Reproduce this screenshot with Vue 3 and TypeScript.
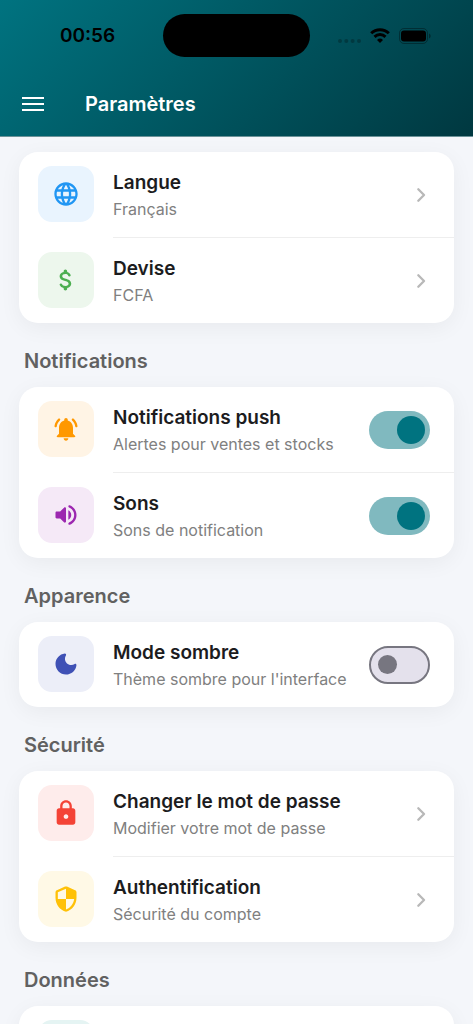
<script setup lang="ts">
import { reactive } from 'vue'

type IconName = 'globe' | 'dollar' | 'bell' | 'volume' | 'moon' | 'lock' | 'shield' | 'cloud'

interface Setting {
  id: string
  title: string
  subtitle: string
  icon: IconName
  kind: 'link' | 'switch'
}

interface Section {
  heading: string
  items: Setting[]
}

const icons: Record<IconName, string> = {
  globe:
    'M11.99 2C6.47 2 2 6.48 2 12s4.47 10 9.99 10C17.52 22 22 17.52 22 12S17.52 2 11.99 2zm6.93 6h-2.95c-.32-1.25-.78-2.45-1.38-3.56 1.84.63 3.37 1.91 4.33 3.56zM12 4.04c.83 1.2 1.48 2.53 1.91 3.96h-3.82c.43-1.43 1.08-2.76 1.91-3.96zM4.26 14C4.1 13.36 4 12.69 4 12s.1-1.36.26-2h3.38c-.08.66-.14 1.32-.14 2s.06 1.34.14 2H4.26zm.82 2h2.95c.32 1.25.78 2.45 1.38 3.56-1.84-.63-3.37-1.9-4.33-3.56zm2.95-8H5.08c.96-1.66 2.49-2.93 4.33-3.56C8.81 5.55 8.35 6.75 8.03 8zM12 19.96c-.83-1.2-1.48-2.53-1.91-3.96h3.82c-.43 1.43-1.08 2.76-1.91 3.96zM14.34 14H9.66c-.09-.66-.16-1.32-.16-2s.07-1.35.16-2h4.68c.09.65.16 1.32.16 2s-.07 1.34-.16 2zm.25 5.56c.6-1.11 1.06-2.31 1.38-3.56h2.95c-.96 1.65-2.49 2.93-4.33 3.56zM16.36 14c.08-.66.14-1.32.14-2s-.06-1.34-.14-2h3.38c.16.64.26 1.31.26 2s-.1 1.36-.26 2h-3.38z',
  dollar:
    'M11.8 10.9c-2.27-.59-3-1.2-3-2.15 0-1.09 1.01-1.85 2.7-1.85 1.42 0 2.13.54 2.39 1.4.12.4.45.7.87.7h.3c.66 0 1.13-.65.9-1.27-.42-1.18-1.4-2.16-2.96-2.54V4.5c0-.83-.67-1.5-1.5-1.5S10 3.67 10 4.5v.66c-1.94.42-3.5 1.68-3.5 3.61 0 2.31 1.91 3.46 4.7 4.13 2.5.6 3 1.48 3 2.41 0 .69-.49 1.79-2.7 1.79-1.65 0-2.5-.59-2.83-1.43-.15-.39-.49-.67-.9-.67h-.28c-.67 0-1.14.68-.89 1.3.57 1.39 1.9 2.21 3.4 2.53v.67c0 .83.67 1.5 1.5 1.5s1.5-.67 1.5-1.5v-.65c1.95-.37 3.5-1.5 3.5-3.55 0-2.84-2.43-3.81-4.7-4.4z',
  bell:
    'M12 22c1.1 0 2-.9 2-2h-4c0 1.1.9 2 2 2zm7.71-4.29L18 16v-5c0-3.07-1.63-5.64-4.5-6.32V4c0-.83-.67-1.5-1.5-1.5s-1.5.67-1.5 1.5v.68C7.64 5.36 6 7.92 6 11v5l-1.71 1.71c-.63.63-.18 1.29.7 1.29H19c.89 0 1.34-.66.71-1.29zM6.77 4.73c.42-.38.43-1.03.03-1.43-.38-.38-1-.39-1.39-.02C3.7 4.84 2.52 6.96 2.14 9.34c-.09.61.38 1.16 1 1.16.48 0 .9-.35.98-.83.3-1.94 1.26-3.67 2.65-4.94zM18.6 3.28c-.4-.37-1.02-.36-1.4.02-.4.4-.38 1.04.03 1.42 1.38 1.27 2.35 3 2.65 4.94.07.48.49.83.98.83.61 0 1.09-.55.99-1.16-.38-2.37-1.55-4.48-3.25-6.05z',
  volume:
    'M3 10v4c0 .55.45 1 1 1h3l3.29 3.29c.63.63 1.71.18 1.71-.71V6.41c0-.89-1.08-1.34-1.71-.71L7 9H4c-.55 0-1 .45-1 1zm13.5 2c0-1.77-1.02-3.29-2.5-4.03v8.05c1.48-.73 2.5-2.25 2.5-4.02zM14 4.45v.2c0 .38.25.71.6.85C17.18 6.53 19 9.06 19 12s-1.82 5.47-4.4 6.5c-.36.14-.6.47-.6.85v.2c0 .63.63 1.07 1.21.85C18.6 19.11 21 15.84 21 12s-2.4-7.11-5.79-8.4c-.58-.23-1.21.22-1.21.85z',
  moon:
    'M11.01 3.05C6.51 3.54 3 7.36 3 12c0 4.97 4.03 9 9 9 4.63 0 8.45-3.5 8.95-8 .09-.79-.78-1.42-1.54-.95-.84.54-1.84.85-2.91.85-2.98 0-5.4-2.42-5.4-5.4 0-1.06.31-2.06.84-2.89.45-.67-.04-1.63-.93-1.56z',
  lock:
    'M18 8h-1V6c0-2.76-2.24-5-5-5S7 3.24 7 6v2H6c-1.1 0-2 .9-2 2v10c0 1.1.9 2 2 2h12c1.1 0 2-.9 2-2V10c0-1.1-.9-2-2-2zm-6 9c-1.1 0-2-.9-2-2s.9-2 2-2 2 .9 2 2-.9 2-2 2zM9 8V6c0-1.66 1.34-3 3-3s3 1.34 3 3v2H9z',
  shield:
    'M11.19 1.36l-7 3.11C3.47 4.79 3 5.51 3 6.3V11c0 5.55 3.84 10.74 9 12 5.16-1.26 9-6.45 9-12V6.3c0-.79-.47-1.51-1.19-1.83l-7-3.11c-.51-.23-1.11-.23-1.62 0zM12 11.99h7c-.53 4.12-3.28 7.79-7 8.94V12H5V6.3l7-3.11v8.8z',
  cloud:
    'M19.35 10.04C18.67 6.59 15.64 4 12 4 9.11 4 6.6 5.64 5.35 8.04 2.34 8.36 0 10.91 0 14c0 3.31 2.69 6 6 6h13c2.76 0 5-2.24 5-5 0-2.64-2.05-4.78-4.65-4.96z',
}

const sections: Section[] = [
  {
    heading: '',
    items: [
      { id: 'langue', title: 'Langue', subtitle: 'Français', icon: 'globe', kind: 'link' },
      { id: 'devise', title: 'Devise', subtitle: 'FCFA', icon: 'dollar', kind: 'link' },
    ],
  },
  {
    heading: 'Notifications',
    items: [
      { id: 'push', title: 'Notifications push', subtitle: 'Alertes pour ventes et stocks', icon: 'bell', kind: 'switch' },
      { id: 'sons', title: 'Sons', subtitle: 'Sons de notification', icon: 'volume', kind: 'switch' },
    ],
  },
  {
    heading: 'Apparence',
    items: [
      { id: 'sombre', title: 'Mode sombre', subtitle: "Thème sombre pour l'interface", icon: 'moon', kind: 'switch' },
    ],
  },
  {
    heading: 'Sécurité',
    items: [
      { id: 'motdepasse', title: 'Changer le mot de passe', subtitle: 'Modifier votre mot de passe', icon: 'lock', kind: 'link' },
      { id: 'auth', title: 'Authentification', subtitle: 'Sécurité du compte', icon: 'shield', kind: 'link' },
    ],
  },
  {
    heading: 'Données',
    items: [{ id: 'donnees', title: '', subtitle: '', icon: 'cloud', kind: 'link' }],
  },
]

const enabled = reactive<Record<string, boolean>>({ push: true, sons: true, sombre: false })
</script>

<template>
  <div class="screen">
    <header class="header">
      <div class="status">
        <span class="time">00:56</span>
        <span class="island"></span>
        <span class="indicators">
          <svg class="dots" viewBox="0 0 24 4" aria-hidden="true">
            <circle cx="2" cy="2" r="2" />
            <circle cx="8.3" cy="2" r="2" />
            <circle cx="14.6" cy="2" r="2" />
            <circle cx="21" cy="2" r="2" />
          </svg>
          <svg class="wifi" viewBox="0 0 20 15" aria-hidden="true">
            <path d="M1.2 5.3a12.6 12.6 0 0 1 17.6 0" />
            <path d="M4.5 8.8a7.9 7.9 0 0 1 11 0" />
            <path class="wifi-tip" d="M10 15l-3-3.1a4.3 4.3 0 0 1 6 0z" />
          </svg>
          <svg class="battery" viewBox="0 0 32 16" aria-hidden="true">
            <rect class="shell" x=".5" y=".5" width="28" height="15" rx="4.5" />
            <path class="cap" d="M30 5.500c2.200.8 2.200 4.200 0 5z" />
            <rect x="2" y="2.500" width="25" height="11" rx="3" />
          </svg>
        </span>
      </div>
      <div class="toolbar">
        <button class="menu" type="button" aria-label="Menu">
          <svg viewBox="0 0 22 16" aria-hidden="true">
            <path d="M0 2h22M0 8h22M0 14h22" />
          </svg>
        </button>
        <h1>Paramètres</h1>
      </div>
    </header>

    <main class="content">
      <section v-for="section in sections" :key="section.heading">
        <h2 v-if="section.heading">{{ section.heading }}</h2>
        <div class="card">
          <component
            :is="item.kind === 'switch' ? 'label' : 'button'"
            v-for="item in section.items"
            :key="item.id"
            class="row"
            :type="item.kind === 'link' ? 'button' : undefined"
            :for="item.kind === 'switch' ? item.id : undefined"
          >
            <span class="tile" :class="item.icon">
              <svg viewBox="0 0 24 24" aria-hidden="true"><path :d="icons[item.icon]" /></svg>
            </span>
            <span class="body">
              <span class="texts">
                <span class="title">{{ item.title }}</span>
                <span class="subtitle">{{ item.subtitle }}</span>
              </span>
              <input
                v-if="item.kind === 'switch'"
                :id="item.id"
                v-model="enabled[item.id]"
                class="switch"
                type="checkbox"
                role="switch"
              />
              <svg v-else class="chevron" viewBox="0 0 24 24" aria-hidden="true">
                <path d="M9.700 7.100l4.900 4.900-4.900 4.900" />
              </svg>
            </span>
          </component>
        </div>
      </section>
    </main>
  </div>
</template>

<style>
html,
body {
  height: 100%;
  margin: 0;
}

body {
  overflow: hidden;
}

#app {
  height: 100%;
}
</style>

<style scoped>
.screen {
  display: flex;
  flex-direction: column;
  height: 100%;
  overflow: hidden;
  background: #f4f6fa;
  color: #1c1c1e;
  font-family: Inter, Roboto, "Liberation Sans", sans-serif;
}

.header {
  flex: none;
  background: linear-gradient(135deg, #007380, #003840);
  border-bottom: 1px solid #6b9298;
}

.status {
  display: grid;
  grid-template-columns: 1fr 147px 1fr;
  align-items: center;
  height: 71px;
}

.time {
  justify-self: center;
  padding-left: 12px;
  color: #000;
  font-size: 19px;
  font-weight: 600;
}

.island {
  height: 43px;
  border-radius: 22px;
  background: #000;
}

.indicators {
  display: flex;
  align-items: center;
  justify-content: flex-end;
  padding-right: 42px;
}

.indicators svg {
  flex: none;
}

.dots {
  width: 24px;
  height: 4px;
  margin: 10px 8px 0 0;
  opacity: 0.25;
}

.wifi {
  width: 20px;
  height: 15px;
  margin-right: 9px;
  fill: none;
  stroke: #000;
  stroke-width: 3;
}

.wifi-tip {
  fill: #000;
  stroke: none;
}

.battery {
  width: 32px;
  height: 16px;
}

.shell {
  fill: none;
  stroke: #000;
  opacity: 0.35;
}

.cap {
  opacity: 0.4;
}

.toolbar {
  display: flex;
  align-items: center;
  height: 65px;
  padding: 0 22px;
}

.menu {
  display: flex;
  margin: 0 41px 0 0;
  padding: 0;
  border: 0;
  background: none;
}

.menu svg {
  width: 22px;
  height: 16px;
  fill: none;
  stroke: #fff;
  stroke-width: 2;
}

h1 {
  margin: 0;
  color: #fff;
  font-size: 20px;
  font-weight: 600;
}

.content {
  padding: 15px 19px 0;
}

h2 {
  margin: 0;
  padding: 12px 5px 0;
  color: #616161;
  font-size: 20px;
  font-weight: 600;
  line-height: 52px;
}

.card {
  border-radius: 19px;
  background: #fff;
  box-shadow: 0 5px 22px rgba(0, 0, 0, 0.05);
  overflow: hidden;
}

.row {
  display: flex;
  box-sizing: border-box;
  width: 100%;
  margin: 0;
  padding: 0 0 0 19px;
  border: 0;
  background: none;
  color: inherit;
  font: inherit;
  text-align: left;
}

.tile {
  display: flex;
  flex: none;
  align-items: center;
  justify-content: center;
  width: 56px;
  height: 56px;
  margin: 14px 19px 15px 0;
  border-radius: 14px;
}

.tile svg {
  width: 28px;
  height: 28px;
  fill: currentColor;
}

.globe {
  background: #e9f4fe;
  color: #2196f3;
}

.dollar {
  background: #edf7ed;
  color: #4caf50;
}

.bell {
  background: #fff4e5;
  color: #ff9800;
}

.volume {
  background: #f5e9f7;
  color: #9c27b0;
}

.moon {
  background: #eceef8;
  color: #3f51b5;
}

.lock {
  background: #feeceb;
  color: #f44336;
}

.shield {
  background: #fff9e6;
  color: #ffc107;
}

.cloud {
  background: #e5f4f3;
  color: #009688;
}

.body {
  display: flex;
  flex: 1;
  align-items: center;
  min-width: 0;
  padding-right: 19px;
}

.row + .row .body {
  border-top: 1px solid #eeeeee;
}

.row + .row .tile {
  margin-top: 15px;
}

.texts {
  display: flex;
  flex: 1;
  flex-direction: column;
  gap: 2px;
  min-width: 0;
  white-space: nowrap;
}

.title {
  font-size: 19px;
  font-weight: 600;
  line-height: 26px;
}

.subtitle {
  color: #808080;
  font-size: 16px;
  line-height: 22px;
}

.chevron {
  flex: none;
  width: 28px;
  height: 28px;
  fill: none;
  stroke: #b8b8b8;
  stroke-width: 2;
  stroke-linecap: round;
  stroke-linejoin: round;
}

.switch {
  display: flex;
  flex: none;
  align-items: center;
  box-sizing: border-box;
  width: 61px;
  height: 38px;
  margin: 0 5px 0 0;
  padding: 0 7px;
  border: 2px solid #777680;
  border-radius: 19px;
  background: #e4e1ec;
  appearance: none;
}

.switch::before {
  width: 19px;
  height: 19px;
  border-radius: 50%;
  background: #777680;
  content: "";
}

.switch:checked {
  justify-content: flex-end;
  padding: 0 5px;
  border: 0;
  background: #80b9bf;
}

.switch:checked::before {
  width: 28px;
  height: 28px;
  background: #007380;
}
</style>
